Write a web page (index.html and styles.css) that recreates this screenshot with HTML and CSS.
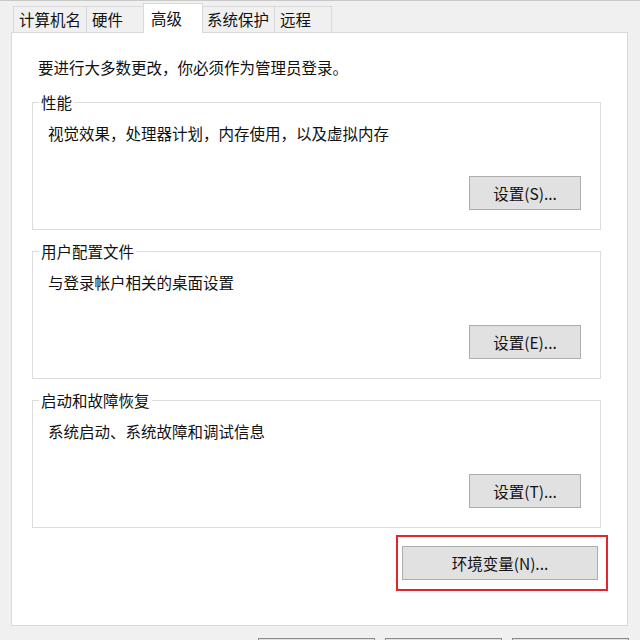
FILE: index.html
```html
<!DOCTYPE html>
<html lang="zh-CN">
<head>
  <meta charset="UTF-8">
  <title>系统属性 – 高级</title>
  <meta name="viewport" content="width=device-width, initial-scale=1">
  <link rel="stylesheet" href="styles.css">
</head>
<body>

  <div class="window">

    <div class="tabs">
      <div class="tab">计算机名</div>
      <div class="tab">硬件</div>
      <div class="tab active">高级</div>
      <div class="tab">系统保护</div>
      <div class="tab">远程</div>
    </div>

    <div class="panel">
      <p class="notice">要进行大多数更改，你必须作为管理员登录。</p>

      <fieldset class="group">
        <legend>性能</legend>
        <p>视觉效果，处理器计划，内存使用，以及虚拟内存</p>
        <div class="group-actions">
          <button class="btn">设置(S)...</button>
        </div>
      </fieldset>

      <fieldset class="group">
        <legend>用户配置文件</legend>
        <p>与登录帐户相关的桌面设置</p>
        <div class="group-actions">
          <button class="btn">设置(E)...</button>
        </div>
      </fieldset>

      <fieldset class="group">
        <legend>启动和故障恢复</legend>
        <p>系统启动、系统故障和调试信息</p>
        <div class="group-actions">
          <button class="btn">设置(T)...</button>
        </div>
      </fieldset>

      <div class="env-row">
        <div class="highlight">
          <button class="btn btn-env">环境变量(N)...</button>
        </div>
      </div>
    </div>

    <!-- OK / Cancel / Apply: only their top edges show -->
    <div class="dialog-buttons">
      <button class="btn btn-dialog" aria-label="确定"></button>
      <button class="btn btn-dialog" aria-label="取消"></button>
      <button class="btn btn-dialog" aria-label="应用"></button>
    </div>

  </div>

</body>
</html>
```

FILE: styles.css
```css
html, body {
  margin: 0;
  padding: 0;
  height: 640px;
  overflow: hidden;
}

body {
  font-family: "Noto Sans CJK SC", "Noto Sans", sans-serif;
  font-size: 15.5px;
  color: #111;
  background: #f0f0f0;
}

.window {
  border-top: 1px solid #c8c8c8;
  padding: 2px 12px 0 11px;
}

/* tab strip */
.tabs {
  display: flex;
  align-items: flex-end;
  height: 29px;
  margin-left: 2px;
}

.tab {
  box-sizing: border-box;
  min-width: 58px;
  height: 26px;
  line-height: 24px;
  padding: 0 5px;
  margin-right: -1px;
  border: 1px solid #d9d9d9;
  border-bottom: 0;
  background: #f0f0f0;
  white-space: nowrap;
}

.tab.active {
  position: relative;
  z-index: 1;
  height: 30px;
  line-height: 28px;
  min-width: 60px;
  padding: 0 7px 1px;
  margin: 0 -2px -1px 0;
  background: #fff;
}

/* main page */
.panel {
  box-sizing: border-box;
  width: 617px;
  height: 594px;
  background: #fff;
  border: 1px solid #d9d9d9;
  padding: 24px 26px 0 20px;
}

.notice {
  margin: 0 0 15px 6px;
  line-height: 20px;
}

.group {
  margin: 0 0 11px 0;
  padding: 11px 19px 19px 15px;
  border: 1px solid #dcdcdc;
  min-width: 0;
}

.group legend {
  margin-left: -9px;
  padding: 0 2px;
  line-height: 20px;
}

.group p {
  margin: 0;
  line-height: 20px;
}

.group-actions {
  display: flex;
  justify-content: flex-end;
  margin-top: 33px;
}

.btn {
  box-sizing: border-box;
  font-family: inherit;
  font-size: 15.5px;
  color: #111;
  background: #e1e1e1;
  border: 1px solid #adadad;
  border-radius: 0;
  padding: 0;
  width: 112px;
  height: 34px;
}

/* environment variables button with red annotation box */
.env-row {
  display: flex;
  justify-content: flex-end;
  margin: -4px -7px 0 0;
}

.highlight {
  border: 2px solid #e3262b;
  padding: 9px 8px 9px 4px;
}

.btn-env {
  width: 196px;
  height: 34px;
}

.dialog-buttons {
  display: flex;
  justify-content: flex-end;
  gap: 10px;
  margin: 12px -1px 0 0;
}

.btn-dialog {
  width: 117px;
  height: 24px;
  border-color: #8c8c8c;
}
```
